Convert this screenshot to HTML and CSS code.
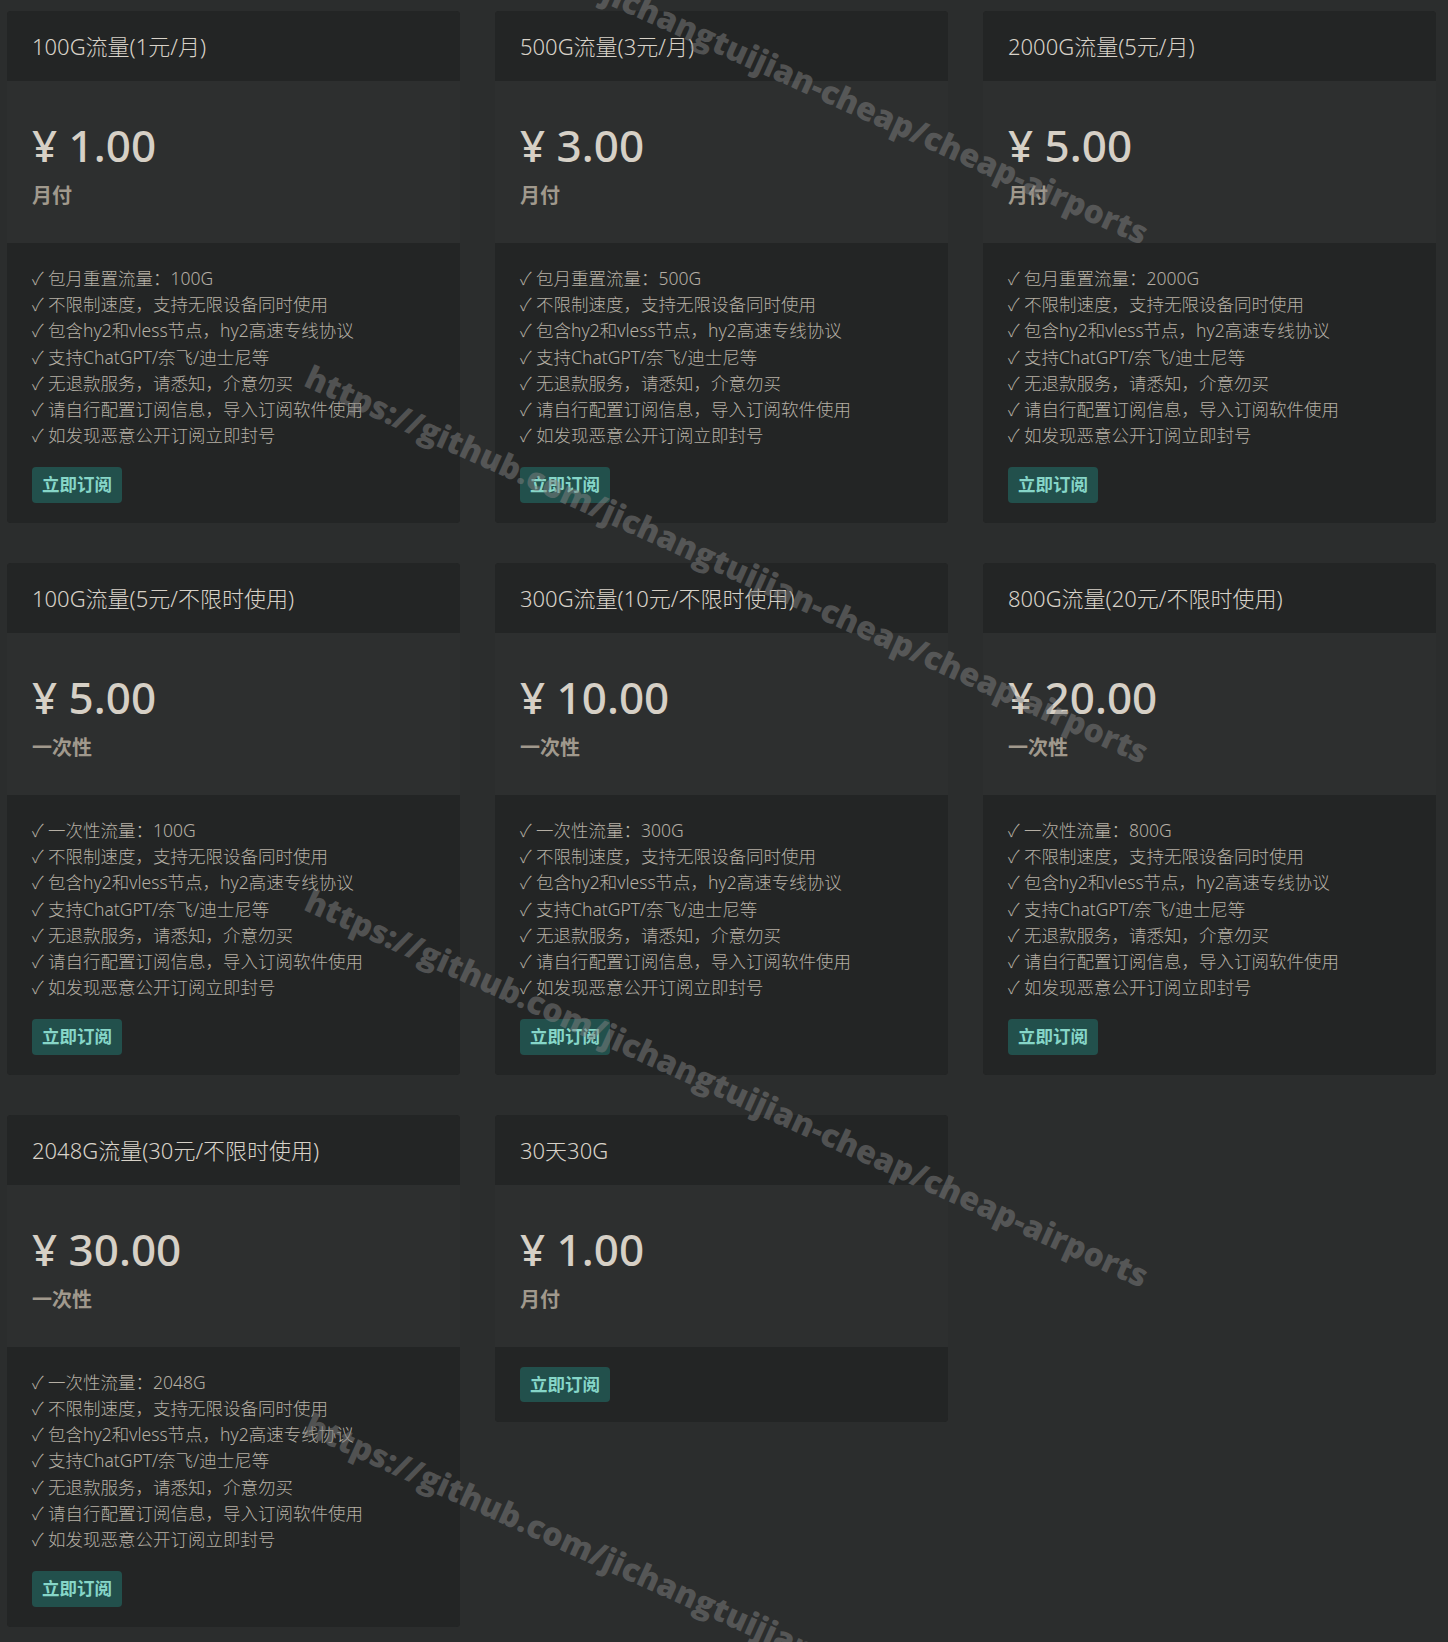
FILE: index.html
```html
<!DOCTYPE html>
<html lang="zh-CN">
<head>
<meta charset="utf-8">
<title>套餐</title>
<link rel="stylesheet" href="styles.css">
</head>
<body>
<div class="page">
  <div class="plans">
    <div class="card">
      <div class="card-head">100G流量(1元/月)</div>
      <div class="card-price"><div class="amount">¥ 1.00</div><div class="period">月付</div></div>
      <div class="card-body">
        <ul class="features">
          <li>✓ 包月重置流量：100G</li>
          <li>✓ 不限制速度，支持无限设备同时使用</li>
          <li>✓ 包含hy2和vless节点，hy2高速专线协议</li>
          <li>✓ 支持ChatGPT/奈飞/迪士尼等</li>
          <li>✓ 无退款服务，请悉知，介意勿买</li>
          <li>✓ 请自行配置订阅信息，导入订阅软件使用</li>
          <li>✓ 如发现恶意公开订阅立即封号</li>
        </ul>
        <a class="btn">立即订阅</a>
      </div>
    </div>
    <div class="card">
      <div class="card-head">500G流量(3元/月)</div>
      <div class="card-price"><div class="amount">¥ 3.00</div><div class="period">月付</div></div>
      <div class="card-body">
        <ul class="features">
          <li>✓ 包月重置流量：500G</li>
          <li>✓ 不限制速度，支持无限设备同时使用</li>
          <li>✓ 包含hy2和vless节点，hy2高速专线协议</li>
          <li>✓ 支持ChatGPT/奈飞/迪士尼等</li>
          <li>✓ 无退款服务，请悉知，介意勿买</li>
          <li>✓ 请自行配置订阅信息，导入订阅软件使用</li>
          <li>✓ 如发现恶意公开订阅立即封号</li>
        </ul>
        <a class="btn">立即订阅</a>
      </div>
    </div>
    <div class="card">
      <div class="card-head">2000G流量(5元/月)</div>
      <div class="card-price"><div class="amount">¥ 5.00</div><div class="period">月付</div></div>
      <div class="card-body">
        <ul class="features">
          <li>✓ 包月重置流量：2000G</li>
          <li>✓ 不限制速度，支持无限设备同时使用</li>
          <li>✓ 包含hy2和vless节点，hy2高速专线协议</li>
          <li>✓ 支持ChatGPT/奈飞/迪士尼等</li>
          <li>✓ 无退款服务，请悉知，介意勿买</li>
          <li>✓ 请自行配置订阅信息，导入订阅软件使用</li>
          <li>✓ 如发现恶意公开订阅立即封号</li>
        </ul>
        <a class="btn">立即订阅</a>
      </div>
    </div>
    <div class="card">
      <div class="card-head">100G流量(5元/不限时使用)</div>
      <div class="card-price"><div class="amount">¥ 5.00</div><div class="period">一次性</div></div>
      <div class="card-body">
        <ul class="features">
          <li>✓ 一次性流量：100G</li>
          <li>✓ 不限制速度，支持无限设备同时使用</li>
          <li>✓ 包含hy2和vless节点，hy2高速专线协议</li>
          <li>✓ 支持ChatGPT/奈飞/迪士尼等</li>
          <li>✓ 无退款服务，请悉知，介意勿买</li>
          <li>✓ 请自行配置订阅信息，导入订阅软件使用</li>
          <li>✓ 如发现恶意公开订阅立即封号</li>
        </ul>
        <a class="btn">立即订阅</a>
      </div>
    </div>
    <div class="card">
      <div class="card-head">300G流量(10元/不限时使用)</div>
      <div class="card-price"><div class="amount">¥ 10.00</div><div class="period">一次性</div></div>
      <div class="card-body">
        <ul class="features">
          <li>✓ 一次性流量：300G</li>
          <li>✓ 不限制速度，支持无限设备同时使用</li>
          <li>✓ 包含hy2和vless节点，hy2高速专线协议</li>
          <li>✓ 支持ChatGPT/奈飞/迪士尼等</li>
          <li>✓ 无退款服务，请悉知，介意勿买</li>
          <li>✓ 请自行配置订阅信息，导入订阅软件使用</li>
          <li>✓ 如发现恶意公开订阅立即封号</li>
        </ul>
        <a class="btn">立即订阅</a>
      </div>
    </div>
    <div class="card">
      <div class="card-head">800G流量(20元/不限时使用)</div>
      <div class="card-price"><div class="amount">¥ 20.00</div><div class="period">一次性</div></div>
      <div class="card-body">
        <ul class="features">
          <li>✓ 一次性流量：800G</li>
          <li>✓ 不限制速度，支持无限设备同时使用</li>
          <li>✓ 包含hy2和vless节点，hy2高速专线协议</li>
          <li>✓ 支持ChatGPT/奈飞/迪士尼等</li>
          <li>✓ 无退款服务，请悉知，介意勿买</li>
          <li>✓ 请自行配置订阅信息，导入订阅软件使用</li>
          <li>✓ 如发现恶意公开订阅立即封号</li>
        </ul>
        <a class="btn">立即订阅</a>
      </div>
    </div>
    <div class="card">
      <div class="card-head">2048G流量(30元/不限时使用)</div>
      <div class="card-price"><div class="amount">¥ 30.00</div><div class="period">一次性</div></div>
      <div class="card-body">
        <ul class="features">
          <li>✓ 一次性流量：2048G</li>
          <li>✓ 不限制速度，支持无限设备同时使用</li>
          <li>✓ 包含hy2和vless节点，hy2高速专线协议</li>
          <li>✓ 支持ChatGPT/奈飞/迪士尼等</li>
          <li>✓ 无退款服务，请悉知，介意勿买</li>
          <li>✓ 请自行配置订阅信息，导入订阅软件使用</li>
          <li>✓ 如发现恶意公开订阅立即封号</li>
        </ul>
        <a class="btn">立即订阅</a>
      </div>
    </div>
    <div class="card">
      <div class="card-head">30天30G</div>
      <div class="card-price"><div class="amount">¥ 1.00</div><div class="period">月付</div></div>
      <div class="card-body">
        <a class="btn">立即订阅</a>
      </div>
    </div>
  </div>

  <div class="watermark wm-1">https://github.com/jichangtuijian-cheap/cheap-airports</div>
  <div class="watermark wm-2">https://github.com/jichangtuijian-cheap/cheap-airports</div>
  <div class="watermark wm-3">https://github.com/jichangtuijian-cheap/cheap-airports</div>
  <div class="watermark wm-4">https://github.com/jichangtuijian-cheap/cheap-airports</div>
</div>
</body>
</html>
```

FILE: styles.css
```css
html, body {
  margin: 0;
  padding: 0;
  background: #2b2d2d;
}

body {
  font-family: "Noto Sans", "Noto Sans CJK SC", sans-serif;
  color: #d6d0c6;
  overflow: hidden;
}

.page {
  position: relative;
  min-height: 1642px;
  overflow: hidden;
}

.plans {
  display: grid;
  grid-template-columns: repeat(3, 453px);
  column-gap: 35px;
  row-gap: 40px;
  align-items: start;
  padding: 11px 0 0 7px;
}

.card {
  border-radius: 4px;
  overflow: hidden;
  background: #232525;
}

.card-head {
  height: 70px;
  box-sizing: border-box;
  padding: 22px 25px 0;
  background: #232525;
  font-size: 22px;
  line-height: 27px;
  font-weight: 300;
  color: #d8d2c8;
}

.card-price {
  background: #2d2f2f;
  padding: 38px 25px 35px;
}

.amount {
  font-size: 44px;
  line-height: 53px;
  font-weight: 500;
  color: #d6d0c6;
  margin-bottom: 12px;
}

.period {
  font-size: 20px;
  line-height: 24px;
  font-weight: 700;
  color: #a0998d;
}

.card-body {
  background: #232525;
  padding: 20px 25px 20px;
}

.features {
  list-style: none;
  margin: 2px 0 19px;
  padding: 0;
  font-size: 17.5px;
  line-height: 26.2px;
  font-weight: 300;
  color: #b5afa4;
}

.btn {
  display: inline-block;
  vertical-align: top;
  padding: 5px 10px;
  font-size: 17.5px;
  line-height: 25.5px;
  font-weight: 700;
  color: #86d6c8;
  background: #22504c;
  border-radius: 4px;
}

.watermark {
  position: absolute;
  left: 314px;
  transform: rotate(24.3deg);
  transform-origin: 0 0;
  font-family: "Open Sans", "Noto Sans", sans-serif;
  font-weight: 800;
  font-size: 32px;
  line-height: 1;
  white-space: nowrap;
  color: rgba(128, 128, 128, 0.5);
  pointer-events: none;
}

.wm-1 { top: -159px; }
.wm-2 { top: 360px; }
.wm-3 { top: 884px; }
.wm-4 { top: 1408px; }
```
